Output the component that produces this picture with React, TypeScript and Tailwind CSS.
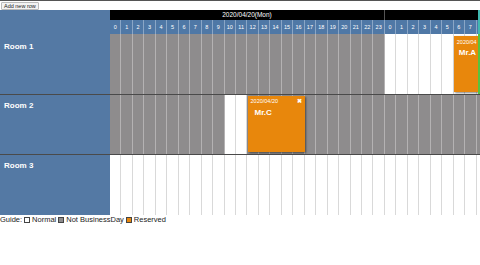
import React from "react";

const CW = 11.46;
const hours = Array.from({ length: 24 }, (_, i) => i);
const day2 = Array.from({ length: 10 }, (_, i) => i);

function Cells({ kind }: { kind: (d: number, h: number) => "g" | "w" }) {
  const all: { d: number; h: number }[] = [
    ...hours.map((h) => ({ d: 0, h })),
    ...day2.map((h) => ({ d: 1, h })),
  ];
  return (
    <div className="flex h-full">
      {all.map(({ d, h }) => (
        <div
          key={`${d}-${h}`}
          style={{ width: CW, minWidth: CW }}
          className={
            kind(d, h) === "g"
              ? "h-full bg-[#8e8c8d] border-r border-[#b4b2b3]"
              : "h-full bg-white border-r border-[#d9d9d9]"
          }
        />
      ))}
    </div>
  );
}

export default function App() {
  const headerHours = [...hours, ...day2.slice(0, 8)];
  return (
    <div
      className="w-[480px] h-[265px] bg-white overflow-hidden relative"
      style={{ fontFamily: '"Liberation Sans", Arial, sans-serif' }}
    >
      <div className="h-[10px] border-t border-[#555] flex items-start">
        <button className="mt-[1px] ml-[1px] h-[8px] px-[2px] border border-[#bbb] rounded-[1px] bg-[#f3f3f3] text-[5.5px] leading-[6px] text-[#222]">
          Add new row
        </button>
      </div>
      <div className="flex">
        <div className="w-[110px] shrink-0 bg-[#5479a4]">
          <div className="h-[24px]" />
          <div className="h-[61px] border-b border-[#4a4a4a] text-white font-bold text-[8px] pl-[4px] pt-[7px]">Room 1</div>
          <div className="h-[60px] border-b border-[#4a4a4a] text-white font-bold text-[8px] pl-[4px] pt-[5px]">Room 2</div>
          <div className="h-[60px] text-white font-bold text-[8px] pl-[4px] pt-[5px]">Room 3</div>
        </div>
        <div className="flex-1 overflow-hidden relative">
          <div className="flex h-[10px] bg-black">
            <div style={{ width: CW * 24, minWidth: CW * 24 }} className="border-r border-[#555] text-white text-[6.5px] leading-[10px] text-center">
              2020/04/20(Mon)
            </div>
            <div className="flex-1" />
          </div>
          <div className="flex h-[14px] bg-[#4f78a6]">
            {headerHours.map((h, i) => (
              <div
                key={i}
                style={{ width: CW, minWidth: CW }}
                className="border-r border-[#8aa6c6] text-white text-[5.5px] leading-[14px] text-center"
              >
                {h}
              </div>
            ))}
            <div className="flex-1" />
          </div>
          <div className="absolute top-0 right-0 w-[2px] h-[24px] bg-[#3fb8b0]" />
          <div className="h-[61px] border-b border-[#4a4a4a] relative">
            <Cells kind={(d) => (d === 0 ? "g" : "w")} />
            <div
              className="absolute top-[2px] bottom-[2px] bg-[#e8870c] shadow-[1px_1px_2px_rgba(0,0,0,0.5)] text-white overflow-hidden"
              style={{ left: CW * 30, width: 26 }}
            >
              <div className="text-[5.5px] pl-[3px] pt-[2px] whitespace-nowrap">2020/04</div>
              <div className="text-[8px] font-bold pl-[5px] pt-[1px] whitespace-nowrap">Mr.A</div>
            </div>
            <div className="absolute top-0 bottom-0 right-0 w-[2px] bg-[#57c33f]" />
          </div>
          <div className="h-[60px] border-b border-[#4a4a4a] relative">
            <Cells kind={(d, h) => (d === 0 && (h === 10 || h === 11) ? "w" : "g")} />
            <div
              className="absolute top-[1px] bottom-[2px] bg-[#e8870c] shadow-[1px_1px_2px_rgba(0,0,0,0.5)] text-white"
              style={{ left: CW * 12, width: CW * 5 }}
            >
              <div className="flex justify-between pl-[3px] pr-[3px] pt-[2px]">
                <span className="text-[5.5px] leading-[7px]">2020/04/20</span>
                <span className="text-[6px] leading-[7px] font-bold">✖</span>
              </div>
              <div className="text-[8px] font-bold pl-[7px] pt-[2px]">Mr.C</div>
            </div>
          </div>
          <div className="h-[60px] relative">
            <Cells kind={() => "w"} />
          </div>
        </div>
      </div>
      <div className="flex items-center text-[7.5px] text-[#222] leading-[10px] gap-[2px]">
        <span>Guide:</span>
        <span className="inline-block w-[6px] h-[6px] border border-[#444] bg-white" />
        <span>Normal</span>
        <span className="inline-block w-[6px] h-[6px] border border-[#444] bg-[#8e8c8d]" />
        <span>Not BusinessDay</span>
        <span className="inline-block w-[6px] h-[6px] border border-[#444] bg-[#e8870c]" />
        <span>Reserved</span>
      </div>
    </div>
  );
}
